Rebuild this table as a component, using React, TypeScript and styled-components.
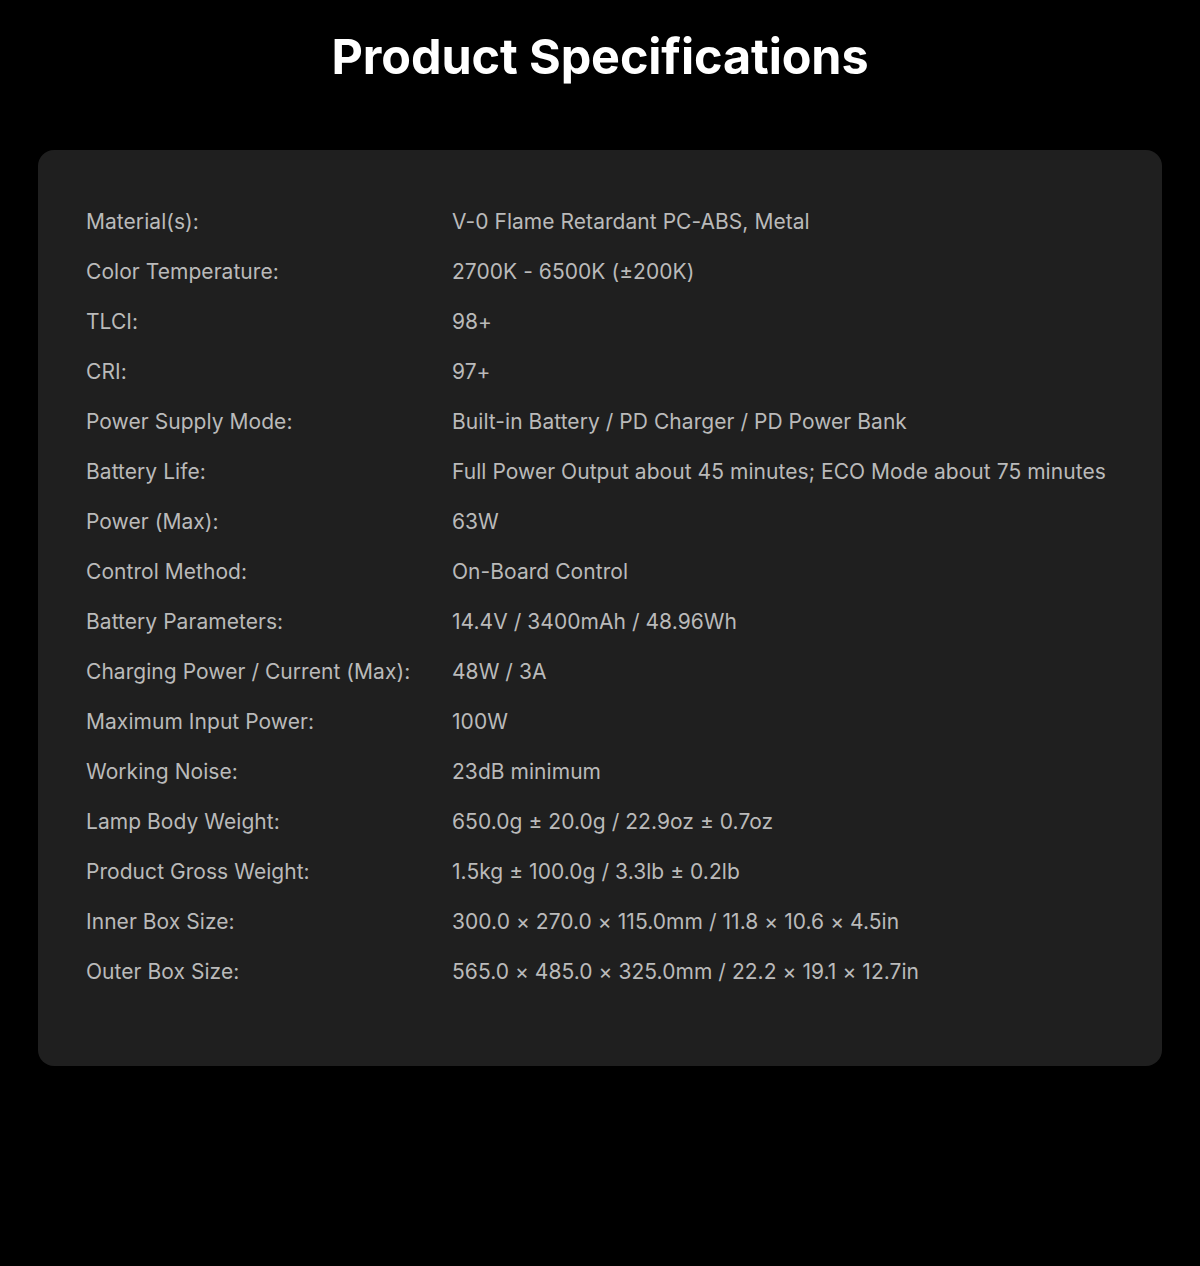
import React from 'react'
import styled, { createGlobalStyle } from 'styled-components'

const GlobalStyle = createGlobalStyle`
  html, body {
    margin: 0;
    padding: 0;
    background: #000;
  }
  body {
    font-family: Inter, "Noto Sans", "Liberation Sans", sans-serif;
  }
`

const Page = styled.div`
  width: 1200px;
  height: 1266px;
  background: #000;
  box-sizing: border-box;
  padding: 26px 38px 0;
`

const Title = styled.h1`
  margin: 0;
  height: 62px;
  line-height: 62px;
  text-align: center;
  color: #fff;
  font-size: 48.5px;
  font-weight: 700;
  letter-spacing: -0.1px;
`

const Card = styled.div`
  margin-top: 62px;
  height: 916px;
  box-sizing: border-box;
  background: #1f1f1f;
  border-radius: 16px;
  padding: 46px 48px 70px;
`

const SpecRow = styled.div`
  display: grid;
  grid-template-columns: 366px 1fr;
  height: 50px;
  align-items: center;
  color: #bababa;
  font-size: 21px;
  letter-spacing: 0.05px;
  white-space: nowrap;
`

const Label = styled.span``

const Value = styled.span``

const specs: [string, string][] = [
  ['Material(s):', 'V-0 Flame Retardant PC-ABS, Metal'],
  ['Color Temperature:', '2700K - 6500K (±200K)'],
  ['TLCI:', '98+'],
  ['CRI:', '97+'],
  ['Power Supply Mode:', 'Built-in Battery / PD Charger / PD Power Bank'],
  ['Battery Life:', 'Full Power Output about 45 minutes; ECO Mode about 75 minutes'],
  ['Power (Max):', '63W'],
  ['Control Method:', 'On-Board Control'],
  ['Battery Parameters:', '14.4V / 3400mAh / 48.96Wh'],
  ['Charging Power / Current (Max):', '48W / 3A'],
  ['Maximum Input Power:', '100W'],
  ['Working Noise:', '23dB minimum'],
  ['Lamp Body Weight:', '650.0g ± 20.0g / 22.9oz ± 0.7oz'],
  ['Product Gross Weight:', '1.5kg ± 100.0g / 3.3lb ± 0.2lb'],
  ['Inner Box Size:', '300.0 × 270.0 × 115.0mm / 11.8 × 10.6 × 4.5in'],
  ['Outer Box Size:', '565.0 × 485.0 × 325.0mm / 22.2 × 19.1 × 12.7in'],
]

const App: React.FC = () => {
  return (
    <>
      <GlobalStyle />
      <Page>
        <Title>Product Specifications</Title>
        <Card>
          {specs.map(([label, value]) => (
            <SpecRow key={label}>
              <Label>{label}</Label>
              <Value>{value}</Value>
            </SpecRow>
          ))}
        </Card>
      </Page>
    </>
  )
}

export default App
